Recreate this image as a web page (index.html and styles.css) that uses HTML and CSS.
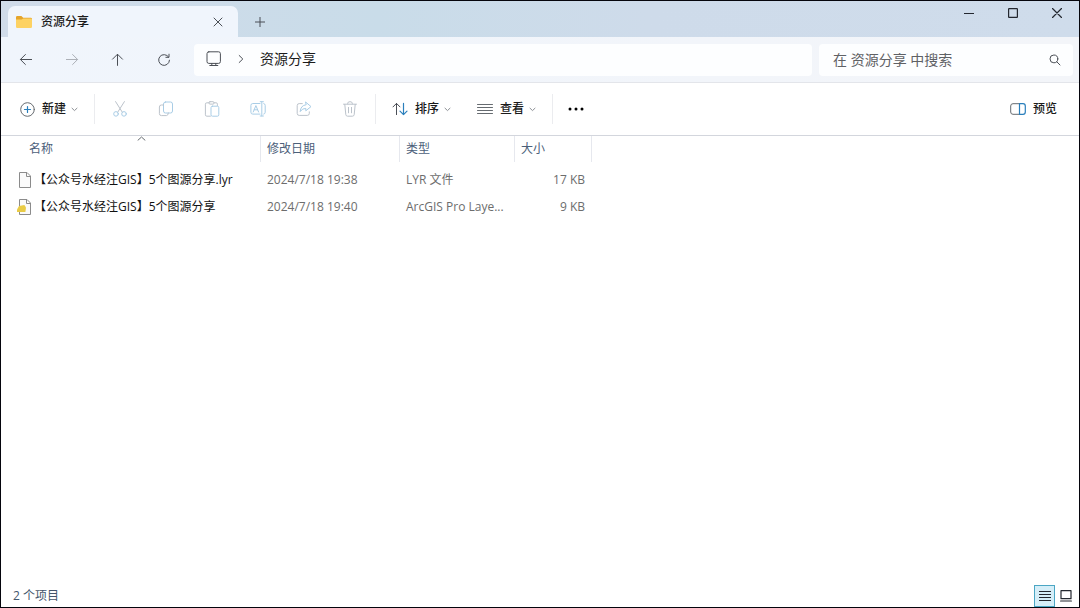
FILE: index.html
```html
<!DOCTYPE html>
<html lang="zh-CN">
<head>
<meta charset="utf-8">
<title>资源分享</title>
<link rel="stylesheet" href="styles.css">
</head>
<body>
<div class="window">
  <header class="titlebar">
    <div class="tab">
      <svg class="tab-icon" width="16" height="14" viewBox="0 0 16 14"><path d="M0 2.2Q0 1 1.2 1H5.4L7.2 2.8H14.6Q16 2.8 16 4V7H0Z" fill="#e5a52c"/><path d="M0 4.6H5.6L7.4 3.4H14.8Q16 3.4 16 4.6V11.8Q16 13 14.8 13H1.2Q0 13 0 11.8Z" fill="#fdd263"/></svg>
      <span class="tab-title">资源分享</span>
      <button class="plain tab-close" aria-label="关闭标签页"><svg width="10" height="10" viewBox="0 0 10 10"><path d="M1 1L9 9M9 1L1 9" class="line dark"/></svg></button>
    </div>
    <button class="plain tab-add" aria-label="新建标签页"><svg width="10" height="10" viewBox="0 0 10 10"><path d="M5 .3V9.7M.3 5H9.7" class="line dark"/></svg></button>
    <div class="window-controls">
      <button class="plain" aria-label="最小化"><svg width="10" height="10" viewBox="0 0 10 10"><path d="M.5 5.5H9.5" class="line ink"/></svg></button>
      <button class="plain" aria-label="最大化"><svg width="10" height="10" viewBox="0 0 10 10"><rect x=".6" y=".6" width="8.8" height="8.8" rx=".5" class="line ink"/></svg></button>
      <button class="plain" aria-label="关闭"><svg width="10" height="10" viewBox="0 0 10 10"><path d="M.5.5L9.5 9.5M9.5.5L.5 9.5" class="line ink"/></svg></button>
    </div>
  </header>

  <nav class="navbar">
    <div class="nav-buttons">
      <button class="plain" aria-label="后退"><svg width="14" height="14" viewBox="0 0 14 14"><path d="M12.6 6.5H1.6M6.4 1.5L1.4 6.5L6.4 11.5" class="line dark"/></svg></button>
      <button class="plain" aria-label="前进" disabled><svg width="14" height="14" viewBox="0 0 14 14"><path d="M1.4 6.5H12.4M7.6 1.5L12.6 6.5L7.6 11.5" class="line faint"/></svg></button>
      <button class="plain" aria-label="向上"><svg width="14" height="14" viewBox="0 0 14 14"><path d="M6.5 12.4V1.4M1.5 6.2L6.5 1.2L11.5 6.2" class="line dark"/></svg></button>
      <button class="plain" aria-label="刷新"><svg width="14" height="14" viewBox="0 0 14 14"><path d="M11.6 4A5.4 5.4 0 1 0 12.5 7.2M12 1.2V4.3H8.9" class="line dark"/></svg></button>
    </div>
    <div class="address">
      <svg width="16" height="16" viewBox="0 0 16 16"><rect x="1" y=".8" width="13.4" height="11.6" rx="1.8" class="line dark"/><path d="M5.8 12.5V14.4M9.8 12.5V14.4M3.8 14.5H11.8" class="line dark"/></svg>
      <svg class="crumb-sep" width="6" height="10" viewBox="0 0 6 10"><path d="M1.2 1.5L4.8 5L1.2 8.5" class="line dark"/></svg>
      <a class="crumb" href="#">资源分享</a>
    </div>
    <div class="search">
      <input class="search-input" type="search" aria-label="搜索" placeholder="在 资源分享 中搜索">
      <svg width="12" height="12" viewBox="0 0 12 12"><circle cx="4.9" cy="4.9" r="3.9" class="line dark"/><path d="M7.8 7.8L11 11" class="line dark"/></svg>
    </div>
  </nav>

  <div class="toolbar" role="toolbar">
    <button class="plain tool-label tool-new">
      <svg width="15" height="15" viewBox="0 0 15 15"><circle cx="7.5" cy="7.5" r="6.8" class="line gray"/><path d="M7.5 4.5V10.5M4.5 7.5H10.5" class="line blue"/></svg>
      <span>新建</span>
      <svg width="7" height="5" viewBox="0 0 7 5"><path d="M1 1.2L3.5 3.6L6 1.2" class="line mid"/></svg>
    </button>
    <span class="divider"></span>
    <div class="tool-icons">
      <button class="plain" aria-label="剪切" disabled><svg width="14" height="16" viewBox="0 0 14 16"><path d="M2.6.6L9.3 11.2M11.4.6L4.7 11.2" class="line off"/><circle cx="3" cy="12.9" r="2.3" class="line off-blue"/><circle cx="11" cy="12.9" r="2.3" class="line off-blue"/></svg></button>
      <button class="plain" aria-label="复制" disabled><svg width="16" height="16" viewBox="0 0 16 16"><rect x="5.5" y="1" width="9" height="11" rx="2" class="line off-blue"/><path d="M5.5 4H3.4Q1.4 4 1.4 6V12.6Q1.4 14.6 3.4 14.6H8.4Q10.2 14.6 10.4 12" class="line off"/></svg></button>
      <button class="plain" aria-label="粘贴" disabled><svg width="16" height="16" viewBox="0 0 16 16"><path d="M5 1.8H2.8Q1.4 1.8 1.4 3.2V13.8Q1.4 15.2 2.8 15.2H6.4M10 1.8H12.2Q13.4 1.8 13.4 3.2V4.5" class="line off"/><rect x="5" y=".7" width="5" height="2.4" rx="1" class="line off"/><rect x="7" y="5.2" width="7.8" height="10" rx="1.4" class="line off-blue"/></svg></button>
      <button class="plain" aria-label="重命名" disabled><svg width="16" height="16" viewBox="0 0 16 16"><path d="M10 2.5H2.8Q.9 2.5 .9 4.4V11.2Q.9 13.1 2.8 13.1H10M13.8 2.5Q15.2 2.8 15.2 4.4V11.2Q15.2 12.8 13.8 13.1M10.2.7H13.4M10.2 15H13.4M11.8.7V15M3.2 11L5.9 4.6L8.6 11M4.2 8.8H7.6" class="line off-blue"/></svg></button>
      <button class="plain" aria-label="共享" disabled><svg width="16" height="16" viewBox="0 0 16 16"><path d="M6.3 2.6H3.2Q1.2 2.6 1.2 4.6V12.4Q1.2 14.4 3.2 14.4H11.3Q13.3 14.4 13.3 12.4V10.8" class="line off"/><path d="M9.8 1.2L15 5.6L9.8 9.8V7.4Q6.4 7.2 4.2 10.6Q4.7 4.4 9.8 3.8Z" class="line off-blue"/></svg></button>
      <button class="plain" aria-label="删除" disabled><svg width="14" height="16" viewBox="0 0 14 16"><path d="M.5 3.2H13.5M4.7 3V2.3Q4.7.7 7 .7Q9.3.7 9.3 2.3V3M1.8 3.4L2.8 13.6Q3 15.2 4.6 15.2H9.4Q11 15.2 11.2 13.6L12.2 3.4M5.5 6.4V11.8M8.5 6.4V11.8" class="line off"/></svg></button>
    </div>
    <span class="divider"></span>
    <button class="plain tool-label tool-sort">
      <svg width="16" height="14" viewBox="0 0 16 14"><path d="M4.5 12.6V1.4M1 4.9L4.5 1.4L8 4.9" class="line dark"/><path d="M11.5 1.4V12.6M8 9.1L11.5 12.6L15 9.1" class="line blue"/></svg>
      <span>排序</span>
      <svg width="7" height="5" viewBox="0 0 7 5"><path d="M1 1.2L3.5 3.6L6 1.2" class="line mid"/></svg>
    </button>
    <button class="plain tool-label tool-view">
      <svg width="16" height="12" viewBox="0 0 16 12"><path d="M.5 1.5H15.5M.5 4.5H15.5M.5 7.5H15.5M.5 10.5H15.5" class="line gray"/></svg>
      <span>查看</span>
      <svg width="7" height="5" viewBox="0 0 7 5"><path d="M1 1.2L3.5 3.6L6 1.2" class="line mid"/></svg>
    </button>
    <span class="divider"></span>
    <button class="plain tool-more" aria-label="查看更多"><svg width="16" height="4" viewBox="0 0 16 4"><circle cx="2" cy="2" r="1.5"/><circle cx="8" cy="2" r="1.5"/><circle cx="14" cy="2" r="1.5"/></svg></button>
    <button class="plain tool-label tool-preview">
      <svg width="16" height="12" viewBox="0 0 16 12"><path d="M9.5.7H3Q.7.7.7 3V9Q.7 11.3 3 11.3H9.5" class="line gray"/><path d="M9.5.7H13Q15.3.7 15.3 3V9Q15.3 11.3 13 11.3H9.5Z" class="line blue"/></svg>
      <span>预览</span>
    </button>
  </div>

  <main class="content">
    <table class="files">
      <colgroup><col class="col-name"><col class="col-date"><col class="col-type"><col class="col-size"></colgroup>
      <thead>
        <tr>
          <th class="name-head" aria-sort="ascending">名称<svg class="sort-mark" width="9" height="5" viewBox="0 0 9 5"><path d="M1 4.2L4.5 1L8 4.2" class="line gray"/></svg></th>
          <th>修改日期</th><th>类型</th><th>大小</th>
        </tr>
      </thead>
      <tbody>
        <tr>
          <td class="name"><div class="name-cell"><svg width="15" height="16" viewBox="0 0 15 16"><path d="M2.5.5H10L13.5 4V15.5H2.5Z" fill="#fafafa" stroke="#8b8b8b"/><path d="M9.5.5V4.5H13.5" class="line file"/></svg><span>【公众号水经注GIS】5个图源分享.lyr</span></div></td>
          <td>2024/7/18 19:38</td><td>LYR 文件</td><td class="size">17 KB</td>
        </tr>
        <tr>
          <td class="name"><div class="name-cell"><svg width="15" height="16" viewBox="0 0 15 16"><path d="M2.5.5H10L13.5 4V15.5H2.5Z" fill="#fafafa" stroke="#8b8b8b"/><path d="M9.5.5V4.5H13.5" class="line file"/><path d="M2 7L7.4 6L9 8.4L8.4 13H0V10.5Z" fill="#e9cb45"/></svg><span>【公众号水经注GIS】5个图源分享</span></div></td>
          <td>2024/7/18 19:40</td><td>ArcGIS Pro Laye...</td><td class="size">9 KB</td>
        </tr>
      </tbody>
    </table>
  </main>

  <footer class="statusbar">
    <span>2 个项目</span>
    <div class="view-modes">
      <button class="plain mode active" aria-label="详细信息" aria-pressed="true"><svg width="12" height="11" viewBox="0 0 12 11"><path d="M.5 1.5H11.5M.5 4.5H11.5M.5 7.5H11.5M.5 10.5H11.5" class="line ink"/></svg></button>
      <button class="plain mode" aria-label="大图标" aria-pressed="false"><svg width="12" height="12" viewBox="0 0 12 12"><rect x="1" y=".7" width="10" height="8" class="line ink"/><path d="M.6 11H11.4" class="line ink"/></svg></button>
    </div>
  </footer>
</div>
</body>
</html>
```

FILE: styles.css
```css
* { box-sizing: border-box; }

body {
  margin: 0;
  font: 12px/16px "Open Sans", "Noto Sans CJK SC", sans-serif;
  color: #1b1b1b;
}

.window {
  display: flex;
  flex-direction: column;
  min-height: 100vh;
  border: 1px solid #05050c;
  background: #fff;
}

.plain {
  display: flex;
  align-items: center;
  justify-content: center;
  padding: 0;
  border: 0;
  background: none;
  color: inherit;
  font: inherit;
}

svg { display: block; flex: none; }
.line { fill: none; stroke-width: 1; stroke-linecap: round; stroke-linejoin: round; }
.dark { stroke: #4b4f56; }
.ink { stroke: #23272f; stroke-width: 1.2; }
.gray { stroke: #666b70; }
.mid { stroke: #8c8f94; }
.faint { stroke: #acb0b7; }
.blue { stroke: #2a7fbc; stroke-width: 1.2; }
.off { stroke: #bcc3cb; }
.off-blue { stroke: #a9cde6; }
.file { stroke: #8b8b8b; }

/* Title bar */
.titlebar {
  display: flex;
  height: 36px;
  padding-left: 7px;
  background: linear-gradient(90deg, #d0dbe9, #c9dce9 35%, #cedbea 60%, #cfdceb);
}
.tab {
  display: flex;
  align-items: center;
  width: 230px;
  margin-top: 5px;
  padding: 0 8px;
  border-radius: 7px 7px 0 0;
  background: #f0f5fc;
}
.tab-title { margin-left: 9px; font-weight: 500; }
.tab-close { width: 24px; height: 24px; margin-left: auto; }
.tab-add { width: 30px; margin: 5px 0 0 7px; }
.window-controls { display: flex; height: 24px; margin-left: auto; }
.window-controls .plain { width: 44px; }

/* Navigation */
.navbar {
  display: flex;
  align-items: center;
  gap: 7px;
  height: 46px;
  padding: 0 6px 0 2px;
  border-bottom: 1px solid #e3e5ea;
  background: linear-gradient(90deg, #f0f5fc, #f3f5f9);
}
.nav-buttons { display: flex; }
.nav-buttons .plain { width: 46px; height: 32px; }
.address, .search {
  display: flex;
  align-items: center;
  height: 32px;
  border-radius: 4px;
  background: #fdfeff;
  font-size: 14px;
}
.address { flex: 1; padding: 0 12px 2px; }
.crumb-sep { margin: 0 16px; }
.crumb { color: #1b1b1b; text-decoration: none; }
.search { width: 254px; padding: 0 12px 0 14px; }
.search-input {
  flex: 1;
  min-width: 0;
  padding: 0;
  border: 0;
  outline: 0;
  background: none;
  color: #1b1b1b;
  font: inherit;
}
.search-input::placeholder { color: #5f6165; opacity: 1; }

/* Commands */
.toolbar {
  display: flex;
  align-items: center;
  height: 53px;
  border-bottom: 1px solid #d3d6dd;
}
.divider { width: 1px; height: 30px; background: #ebecef; }
.tool-label { height: 32px; font-weight: 500; }
.tool-label span { margin: 0 5px 0 7px; }
.tool-new { margin: 0 16px 0 19px; }
.tool-icons { display: flex; margin: 0 2px; }
.tool-icons .plain { width: 46px; height: 32px; }
.tool-sort { margin-left: 16px; }
.tool-view { margin: 0 16px 0 26px; }
.tool-more { width: 46px; height: 32px; }
.tool-preview { margin: 0 22px 0 auto; }
.tool-preview span { margin-right: 0; }

/* File list */
.content { flex: 1; }
.files { width: 591px; table-layout: fixed; border-collapse: separate; border-spacing: 0; }
.col-name { width: 260px; }
.col-date { width: 139px; }
.col-type { width: 115px; }
.col-size { width: 77px; }
.files th {
  position: relative;
  height: 26px;
  padding: 0 6px;
  border-right: 1px solid #e6e8ee;
  color: #4c607a;
  font-weight: 400;
  text-align: left;
}
.files .name-head { padding-left: 28px; }
.sort-mark { position: absolute; top: 0; left: 136px; }
.files tbody::before { content: ""; display: block; height: 4px; }
.files td { height: 27px; padding: 0 6px; color: #6d6d6d; white-space: nowrap; }
.files .name { padding-left: 16px; color: #111; }
.name-cell { display: flex; align-items: center; gap: 2px; }
.files .size { padding-right: 7px; text-align: right; }

/* Status */
.statusbar {
  display: flex;
  align-items: center;
  justify-content: space-between;
  height: 23px;
  padding: 0 3px 0 12px;
  color: #44566c;
}
.view-modes { display: flex; }
.mode { width: 21px; height: 22px; }
.mode.active { border: 1px solid #4ba6c4; background: #d5eef8; }
```
